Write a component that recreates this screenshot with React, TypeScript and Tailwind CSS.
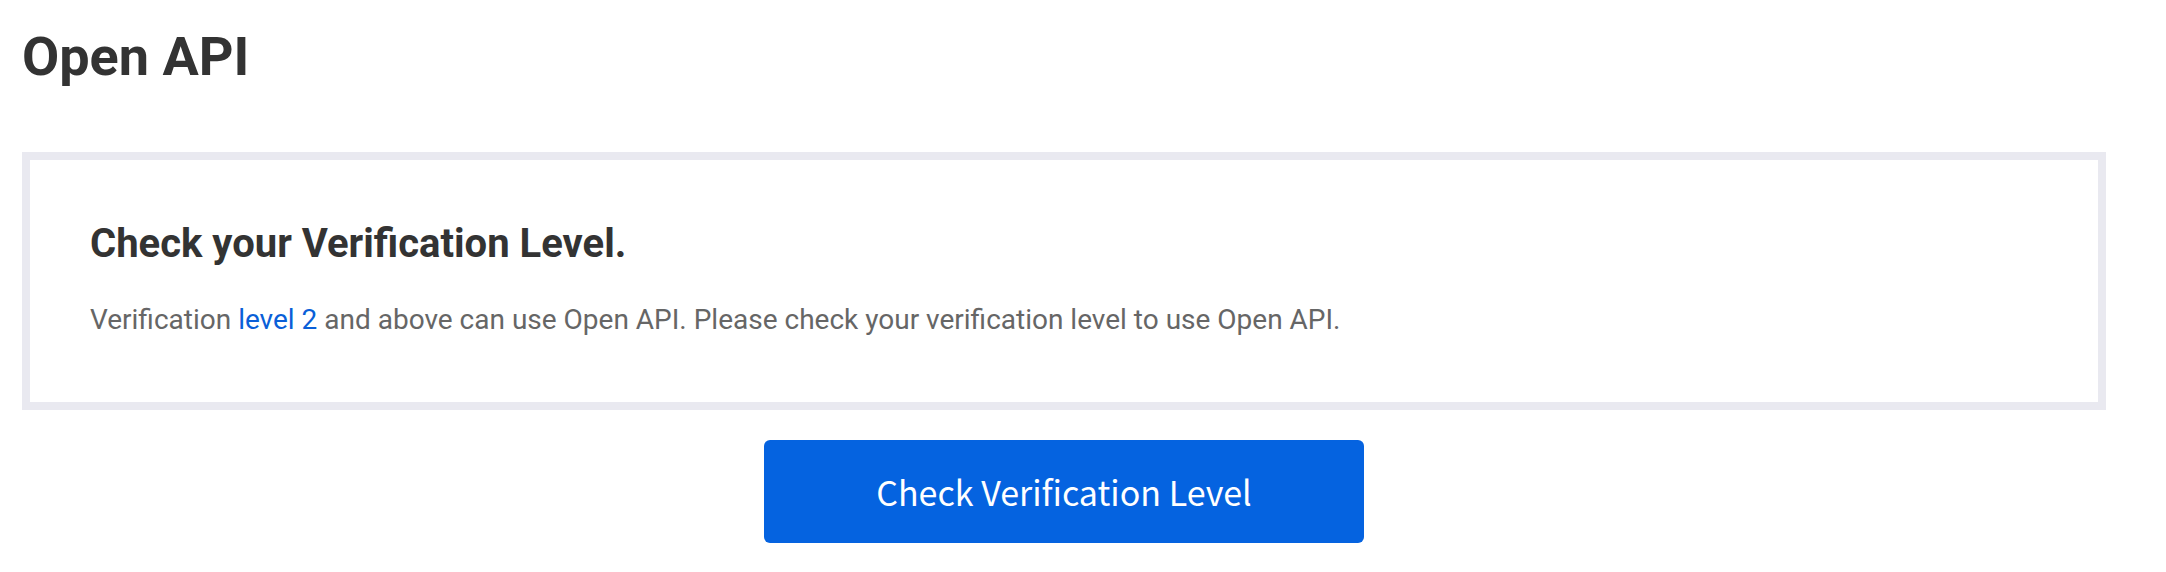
export default function App() {
  return (
    <div className="min-h-[572px] bg-white font-['Roboto',sans-serif]">
      <div className="px-[22px] pt-[25px]">
        <h1 className="text-[54px] font-bold leading-[64px] text-[#333333]">Open API</h1>

        <div className="mt-[63px] w-[2084px] border-[8px] border-[#e9e9f0] bg-white pl-[60px] pt-[60px] pb-[65px]">
          <h2 className="text-[40px] font-bold leading-[48px] text-[#333333]">Check your Verification Level.</h2>
          <p className="mt-[35px] text-[28px] leading-[34px] text-[#666666]">
            Verification <a className="text-[#0a5fd8]">level 2</a> and above can use Open API. Please check your verification level to use Open API.
          </p>
        </div>

        <div className="mt-[30px] flex w-[2084px] justify-center">
          <button className="flex h-[103px] w-[600px] items-center justify-center rounded-[6px] bg-[#0563e0] font-['Noto_Sans_CJK_KR',sans-serif] text-[34px] text-white">
            Check Verification Level
          </button>
        </div>
      </div>
    </div>
  );
}
